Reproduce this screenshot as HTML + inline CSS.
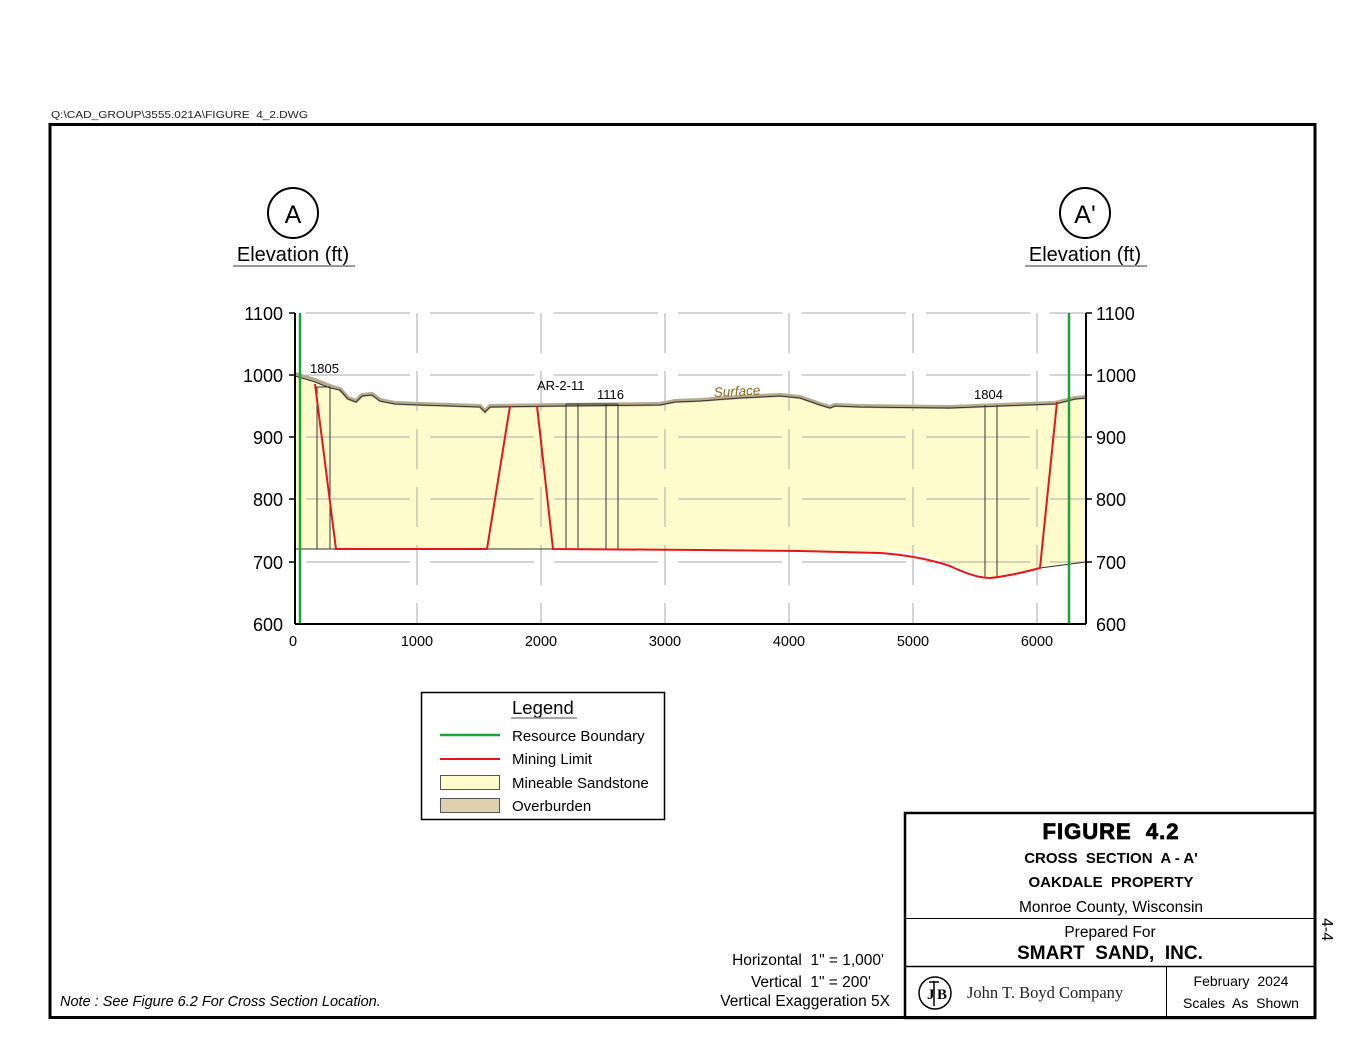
<!DOCTYPE html>
<html><head><meta charset="utf-8"><style>
html,body{margin:0;padding:0;background:#fff;}
svg{display:block;font-family:"Liberation Sans",sans-serif;}
text{white-space:pre;}
</style></head><body>
<svg width="1365" height="1055" viewBox="0 0 1365 1055" xmlns="http://www.w3.org/2000/svg">
<rect width="1365" height="1055" fill="#fff"/>
<text x="51" y="118" font-size="10.5" fill="#222" textLength="257" lengthAdjust="spacingAndGlyphs">Q:\CAD_GROUP\3555.021A\FIGURE  4_2.DWG</text>
<rect x="50" y="124.5" width="1265" height="893" fill="none" stroke="#000" stroke-width="3"/>

<circle cx="293" cy="213" r="25" fill="none" stroke="#000" stroke-width="2"/>
<text x="293" y="223" font-size="25" text-anchor="middle">A</text>
<text x="293" y="261" font-size="20" text-anchor="middle">Elevation (ft)</text>
<line x1="233" y1="266" x2="355" y2="266" stroke="#777" stroke-width="1.5"/>
<circle cx="1085" cy="213" r="25" fill="none" stroke="#000" stroke-width="2"/>
<text x="1085" y="223" font-size="25" text-anchor="middle">A'</text>
<text x="1085" y="261" font-size="20" text-anchor="middle">Elevation (ft)</text>
<line x1="1025" y1="266" x2="1147" y2="266" stroke="#777" stroke-width="1.5"/>

<path d="M295,374 L315,380 L330,386 L340,389 L348,398 L356,401 L362,395 L372,394 L380,400 L395,403 L420,404 L480,406 L485,411 L490,406 L560,405 L660,404 L675,401 L700,400 L740,397 L780,395 L800,397 L820,404 L830,407 L835,405 L860,406 L950,407 L1000,405 L1055,403 L1075,398 L1086,397 L1086,562 L1060,565 L1040,568 L1000,575 L990,578 L965,570 L940,560 L910,552 L800,551 L700,550 L553,549 L295,549 Z" fill="#fefccc"/>

<g stroke="#aaa" stroke-width="1" stroke-dasharray="104,20" stroke-dashoffset="-10">
<line x1="296" y1="313" x2="1086" y2="313"/>
<line x1="296" y1="375" x2="1086" y2="375"/>
<line x1="296" y1="437" x2="1086" y2="437"/>
<line x1="296" y1="499" x2="1086" y2="499"/>
<line x1="296" y1="562" x2="1086" y2="562"/>
</g>
<g stroke="#aaa" stroke-width="1" stroke-dasharray="40,18">
<line x1="417" y1="313" x2="417" y2="624"/>
<line x1="541" y1="313" x2="541" y2="624"/>
<line x1="665" y1="313" x2="665" y2="624"/>
<line x1="789" y1="313" x2="789" y2="624"/>
<line x1="913" y1="313" x2="913" y2="624"/>
<line x1="1037" y1="313" x2="1037" y2="624"/>
</g>

<path d="M295,374 L315,380 L330,386 L340,389 L348,398 L356,401 L362,395 L372,394 L380,400 L395,403 L420,404 L480,406 L485,411 L490,406 L560,405 L660,404 L675,401 L700,400 L740,397 L780,395 L800,397 L820,404 L830,407 L835,405 L860,406 L950,407 L1000,405 L1055,403 L1075,398 L1086,397" fill="none" stroke="#b7aa8a" stroke-width="4"/>
<path d="M295,376 L315,382 L330,388 L340,390 L348,399 L356,402 L362,396 L372,395 L380,401 L395,404 L420,405 L480,407 L485,412 L490,407 L560,406 L660,405 L675,402 L700,401 L740,398 L780,396 L800,398 L820,405 L830,408 L835,406 L860,407 L950,408 L1000,406 L1055,404 L1075,399 L1086,398" fill="none" stroke="#333" stroke-width="1"/>
<line x1="295" y1="549" x2="553" y2="549" stroke="#333" stroke-width="1"/>
<line x1="1040" y1="568" x2="1086" y2="562" stroke="#333" stroke-width="1"/>

<g fill="none" stroke="#333" stroke-width="1">
<rect x="317" y="387" width="13" height="162"/>
<line x1="566" y1="404" x2="566" y2="549"/><line x1="578" y1="404" x2="578" y2="549"/>
<line x1="566" y1="404" x2="618" y2="404"/>
<line x1="606" y1="404" x2="606" y2="549"/><line x1="618" y1="404" x2="618" y2="549"/>
<line x1="985" y1="405" x2="985" y2="578"/><line x1="997" y1="405" x2="997" y2="578"/>
</g>

<g fill="none" stroke="#e8141c" stroke-width="2">
<path d="M315,384 L336,549 L487,549 L510,406"/>
<path d="M537,406 L553,549 L700,550 L800,551 L880,553 Q920,556 950,566 Q975,578 990,578 Q1010,576 1040,568 L1057,402"/>
</g>

<line x1="300" y1="313" x2="300" y2="624" stroke="#1aa33a" stroke-width="2.5"/>
<line x1="1069" y1="313" x2="1069" y2="624" stroke="#1aa33a" stroke-width="2.5"/>

<g stroke="#000" stroke-width="2" fill="none">
<line x1="295" y1="313" x2="295" y2="624"/>
<line x1="1086" y1="313" x2="1086" y2="624"/>
<line x1="295" y1="624" x2="1086" y2="624"/>
</g>
<g stroke="#000" stroke-width="1.5">
<line x1="289" y1="313" x2="295" y2="313"/><line x1="289" y1="375" x2="295" y2="375"/><line x1="289" y1="437" x2="295" y2="437"/><line x1="289" y1="499" x2="295" y2="499"/><line x1="289" y1="562" x2="295" y2="562"/>
<line x1="1086" y1="313" x2="1092" y2="313"/><line x1="1086" y1="375" x2="1092" y2="375"/><line x1="1086" y1="437" x2="1092" y2="437"/><line x1="1086" y1="499" x2="1092" y2="499"/><line x1="1086" y1="562" x2="1092" y2="562"/>
</g>
<g font-size="18" text-anchor="end">
<text x="283" y="320">1100</text><text x="283" y="382">1000</text><text x="283" y="444">900</text><text x="283" y="506">800</text><text x="283" y="569">700</text><text x="283" y="631">600</text>
</g>
<g font-size="18">
<text x="1096" y="320">1100</text><text x="1096" y="382">1000</text><text x="1096" y="444">900</text><text x="1096" y="506">800</text><text x="1096" y="569">700</text><text x="1096" y="631">600</text>
</g>
<g font-size="14.5" text-anchor="middle">
<text x="293" y="646">0</text><text x="417" y="646">1000</text><text x="541" y="646">2000</text><text x="665" y="646">3000</text><text x="789" y="646">4000</text><text x="913" y="646">5000</text><text x="1037" y="646">6000</text>
</g>
<g font-size="13">
<text x="310" y="373">1805</text>
<text x="537" y="390">AR-2-11</text>
<text x="597" y="399">1116</text>
<text x="974" y="399">1804</text>
</g>
<text x="714" y="397" font-size="13.5" font-style="italic" fill="#8a6a1a" transform="rotate(-3 714 397)">Surface</text>

<rect x="421.5" y="692.5" width="243" height="127" fill="#fff" stroke="#000" stroke-width="1.5"/>
<text x="512" y="714" font-size="18.5">Legend</text>
<line x1="511" y1="718" x2="577" y2="718" stroke="#888" stroke-width="1.5"/>
<line x1="440" y1="735" x2="500" y2="735" stroke="#1aa33a" stroke-width="2.5"/>
<text x="512" y="741" font-size="15">Resource Boundary</text>
<line x1="440" y1="759" x2="500" y2="759" stroke="#e8141c" stroke-width="2"/>
<text x="512" y="764" font-size="15">Mining Limit</text>
<rect x="440.5" y="775.5" width="59" height="14" fill="#fefccc" stroke="#555"/>
<text x="512" y="788" font-size="15">Mineable Sandstone</text>
<rect x="440.5" y="798.5" width="59" height="14" fill="#ddd1ae" stroke="#555"/>
<text x="512" y="811" font-size="15">Overburden</text>

<text x="60" y="1006" font-size="14.5" font-style="italic">Note : See Figure 6.2 For Cross Section Location.</text>
<g font-size="15.5" text-anchor="end">
<text x="884" y="965">Horizontal  1" = 1,000'</text>
<text x="871" y="987">Vertical  1" = 200'</text>
<text x="890" y="1006">Vertical Exaggeration 5X</text>
</g>

<g fill="none" stroke="#000">
<rect x="905" y="813" width="410" height="205" stroke-width="2.5"/>
<line x1="905" y1="918.5" x2="1315" y2="918.5" stroke-width="1"/>
<line x1="905" y1="966.5" x2="1315" y2="966.5" stroke-width="1.5"/>
<line x1="1166.5" y1="966" x2="1166.5" y2="1018" stroke-width="1"/>
</g>
<g text-anchor="middle">
<text x="1111" y="839" font-size="22" font-weight="bold" stroke="#000" stroke-width="0.8" letter-spacing="1">FIGURE  4.2</text>
<text x="1111" y="863" font-size="15" font-weight="bold">CROSS  SECTION  A - A'</text>
<text x="1111" y="887" font-size="15" font-weight="bold">OAKDALE  PROPERTY</text>
<text x="1111" y="912" font-size="15.5">Monroe County, Wisconsin</text>
<text x="1110" y="937" font-size="15.5">Prepared For</text>
<text x="1110" y="959" font-size="19" font-weight="bold">SMART  SAND,  INC.</text>
<text x="1241" y="986" font-size="14">February  2024</text>
<text x="1241" y="1008" font-size="14">Scales  As  Shown</text>
</g>
<circle cx="935" cy="993" r="16" fill="none" stroke="#000" stroke-width="1.5"/>
<text x="927" y="999" font-size="15" font-family="'Liberation Serif',serif" font-weight="bold">J</text>
<text x="937" y="999" font-size="15" font-family="'Liberation Serif',serif" font-weight="bold">B</text>
<line x1="934" y1="981" x2="934" y2="1006" stroke="#000" stroke-width="1.5"/>
<line x1="929" y1="982" x2="939" y2="982" stroke="#000" stroke-width="1.5"/>
<text x="967" y="998" font-size="16.5" font-family="'Liberation Serif',serif" fill="#222">John T. Boyd Company</text>
<text x="1322" y="918" font-size="16" transform="rotate(90 1322 918)">4-4</text>
</svg>
</body></html>
